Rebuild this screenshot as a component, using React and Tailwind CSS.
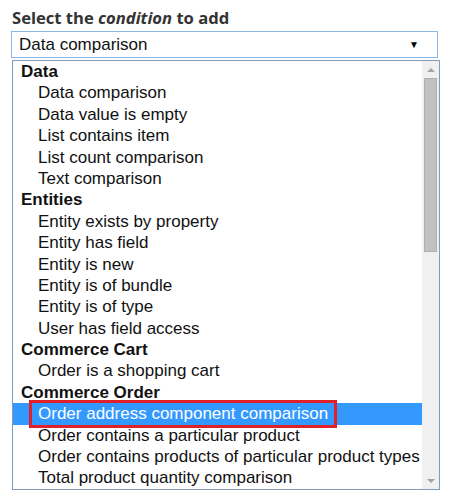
import React from 'react';

const groups = [
  { label: 'Data', items: ['Data comparison', 'Data value is empty', 'List contains item', 'List count comparison', 'Text comparison'] },
  { label: 'Entities', items: ['Entity exists by property', 'Entity has field', 'Entity is new', 'Entity is of bundle', 'Entity is of type', 'User has field access'] },
  { label: 'Commerce Cart', items: ['Order is a shopping cart'] },
  {
    label: 'Commerce Order',
    items: [
      'Order address component comparison',
      'Order contains a particular product',
      'Order contains products of particular product types',
      'Total product quantity comparison',
    ],
  },
];

const selected = 'Order address component comparison';

const App = () => {
  return (
    <div className="pl-[11px] pt-[7px] bg-white min-h-screen" style={{ fontFamily: 'Arial' }}>
      <div className="pl-[1px] text-[16.6px] font-bold text-[#333] leading-[21px] mb-[3px]" style={{ fontFamily: '"Open Sans", sans-serif' }}>
        Select the <em>condition</em> to add
      </div>
      <div className="w-[427px] h-[27px] border border-[#8db4e6] flex items-center justify-between pl-[7px] pr-[18px] text-[17px] text-[#111]" style={{ fontFamily: '"Liberation Sans", Arial, sans-serif' }}>
        <span>Data comparison</span>
        <span className="text-[10px] text-black">▼</span>
      </div>
      <div className="mt-[2px] ml-[1px] w-[428px] h-[430px] border border-[#7f9db9] flex overflow-hidden" style={{ fontFamily: '"Liberation Sans", Arial, sans-serif' }}>
        <div className="flex-1 text-[17px] text-[#111]">
          {groups.map((g) => (
            <div key={g.label}>
              <div className="h-[21.4px] leading-[21.4px] pl-[8px] font-bold">{g.label}</div>
              {g.items.map((it) =>
                it === selected ? (
                  <div key={it} className="h-[21.4px] bg-[#3399ff] text-white flex items-center pl-[16px]">
                    <span className="border-[3px] border-[#e0202a] px-[6px] leading-[22px] -my-[3px]">{it}</span>
                  </div>
                ) : (
                  <div key={it} className="h-[21.4px] leading-[21.4px] pl-[25px] whitespace-nowrap">{it}</div>
                )
              )}
            </div>
          ))}
        </div>
        <div className="w-[17px] bg-[#f0f0f0] flex flex-col items-center">
          <div className="h-[17px] flex items-center justify-center">
            <div className="w-0 h-0 border-l-[4px] border-r-[4px] border-b-[4px] border-l-transparent border-r-transparent border-b-[#a3a3a3]" />
          </div>
          <div className="w-[13px] h-[174px] bg-[#c1c1c1] border border-[#b0b0b0]" />
          <div className="flex-1" />
          <div className="h-[17px] flex items-center justify-center">
            <div className="w-0 h-0 border-l-[4px] border-r-[4px] border-t-[4px] border-l-transparent border-r-transparent border-t-[#a3a3a3]" />
          </div>
        </div>
      </div>
    </div>
  );
};

export default App;
